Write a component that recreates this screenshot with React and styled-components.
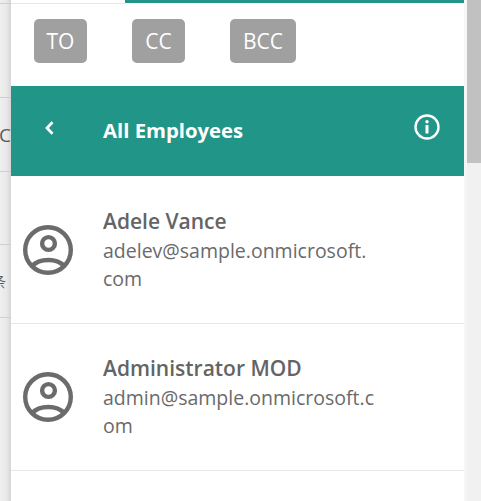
import React from "react";
import styled, { createGlobalStyle } from "styled-components";

const Global = createGlobalStyle`
  html, body { margin: 0; padding: 0; background: #fff; overflow: hidden; }
  #root { width: 481px; height: 501px; }
`;

const Page = styled.div`
  width: 481px;
  height: 501px;
  display: flex;
  overflow: hidden;
  font-family: "Open Sans", "Noto Sans", sans-serif;
`;

const Backdrop = styled.div`
  width: 11px;
  flex: none;
  display: flex;
  flex-direction: column;
  background: linear-gradient(90deg, #f0f0f0 0%, #e8e8e8 60%, #d6d6d6 100%);
`;

const BackdropRow = styled.div`
  height: ${(p) => p.$h}px;
  flex: none;
  box-sizing: border-box;
  padding-right: ${(p) => p.$right}px;
  border-bottom: 1px solid #cfcfcf;
  display: flex;
  align-items: center;
  justify-content: flex-end;
  overflow: hidden;
  color: #5c5c5c;
  font-size: ${(p) => p.$size}px;
  font-family: "Open Sans", "Noto Sans CJK SC", sans-serif;
  white-space: nowrap;
`;

const Panel = styled.main`
  width: 453px;
  flex: none;
  display: flex;
  flex-direction: column;
  background: #fff;
`;

const TabBar = styled.div`
  height: 4px;
  flex: none;
  display: flex;
`;

const TabLine = styled.div`
  flex: 1;
  height: 1px;
  margin-top: 3px;
  background: #e6e6e6;
`;

const TabIndicator = styled.div`
  width: 339px;
  height: 3px;
  background: #219587;
`;

const RecipientBar = styled.div`
  height: 82px;
  flex: none;
  box-sizing: border-box;
  padding: 15px 0 0 23px;
  display: flex;
  align-items: flex-start;
  gap: 45px;
`;

const RecipientButton = styled.button`
  height: 44px;
  min-width: 53px;
  box-sizing: border-box;
  padding: 0 ${(p) => p.$pad}px;
  border: 0;
  border-radius: 5px;
  background: #a0a0a0;
  color: #fff;
  font: 400 21px "Open Sans", sans-serif;
  display: flex;
  align-items: center;
  justify-content: center;
`;

const Header = styled.header`
  height: 90px;
  flex: none;
  display: flex;
  align-items: center;
  background: #219587;
  color: #fff;
`;

const BackButton = styled.div`
  width: 92px;
  flex: none;
  box-sizing: border-box;
  padding: 0 0 7px 32px;
  display: flex;
`;

const Title = styled.h1`
  flex: 1;
  margin: 0;
  font-size: 20.3px;
  font-weight: 700;
  line-height: 27px;
  padding-bottom: 2px;
`;

const InfoButton = styled.div`
  width: 26px;
  height: 26px;
  margin: 0 24px 8px 0;
`;

const List = styled.section`
  padding-top: 1px;
  display: flex;
  flex-direction: column;
`;

const Person = styled.article`
  height: 147px;
  flex: none;
  box-sizing: border-box;
  padding: 29px 0 0 12px;
  display: flex;
  border-bottom: 1px solid #e6e6e6;
`;

const Avatar = styled.div`
  width: 50px;
  height: 50px;
  flex: none;
  margin: 19px 30px 0 0;
`;

const PersonText = styled.div`
  width: 272px;
  color: #646464;
`;

const Name = styled.div`
  font-size: 21px;
  font-weight: 600;
  line-height: 30px;
  margin-bottom: 1px;
`;

const Email = styled.div`
  font-size: 19.5px;
  line-height: 28px;
  color: #6a6a6a;
  word-break: break-all;
`;

const Gutter = styled.div`
  width: 17px;
  flex: none;
  display: flex;
  flex-direction: column;
  background: #f1f1f1;
  border-left: 3px solid #f6f6f6;
  box-sizing: border-box;
`;

const Thumb = styled.div`
  height: 163px;
  background: #c1c1c1;
`;

const Chevron = () => (
  <svg width="12" height="16" viewBox="0 0 12 16" fill="none">
    <path d="M9.5 2.2 L4 8 L9.5 13.8" stroke="#fff" strokeWidth="2.8" />
  </svg>
);

const Info = () => (
  <svg width="26" height="26" viewBox="0 0 26 26" fill="none">
    <circle cx="13" cy="13" r="11.5" stroke="#fff" strokeWidth="2.4" />
    <circle cx="13" cy="7.8" r="1.7" fill="#fff" />
    <rect x="11.5" y="11" width="3" height="8.5" rx="0.5" fill="#fff" />
  </svg>
);

const UserIcon = () => (
  <svg width="50" height="50" viewBox="0 0 50 50" fill="none">
    <circle cx="25" cy="25" r="22.8" stroke="#6b6b6b" strokeWidth="4.4" />
    <circle cx="25.5" cy="18.5" r="6.4" stroke="#6b6b6b" strokeWidth="4.4" />
    <path d="M9.5 41 C13 36.5 19 35 25.5 35 C32 35 37 36.5 41 41" stroke="#6b6b6b" strokeWidth="4.4" />
  </svg>
);

const people = [
  { name: "Adele Vance", email: "adelev@sample.onmicrosoft.com" },
  { name: "Administrator MOD", email: "admin@sample.onmicrosoft.com" },
];

const backdrop = [
  { h: 4, s: 19, r: 0 },
  { h: 94, s: 19, r: 0 },
  { h: 74, t: "C", s: 19, r: 0 },
  { h: 73, s: 19, r: 0 },
  { h: 73, t: "条", s: 14, r: 5 },
];

export default function App() {
  return (
    <Page>
      <Global />
      <Backdrop>
        {backdrop.map((r, i) => (
          <BackdropRow key={i} $h={r.h} $size={r.s} $right={r.r}>{r.t}</BackdropRow>
        ))}
      </Backdrop>
      <Panel>
        <TabBar><TabLine /><TabIndicator /></TabBar>
        <RecipientBar>
          <RecipientButton $pad={0}>TO</RecipientButton>
          <RecipientButton $pad={0}>CC</RecipientButton>
          <RecipientButton $pad={13}>BCC</RecipientButton>
        </RecipientBar>
        <Header>
          <BackButton><Chevron /></BackButton>
          <Title>All Employees</Title>
          <InfoButton><Info /></InfoButton>
        </Header>
        <List>
          {people.map((p) => (
            <Person key={p.name}>
              <Avatar><UserIcon /></Avatar>
              <PersonText>
                <Name>{p.name}</Name>
                <Email>{p.email}</Email>
              </PersonText>
            </Person>
          ))}
        </List>
      </Panel>
      <Gutter><Thumb /></Gutter>
    </Page>
  );
}
